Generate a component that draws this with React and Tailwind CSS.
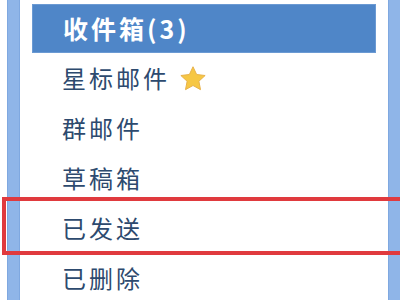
import React from "react";

const font = { fontFamily: '"Noto Sans CJK SC", "Noto Sans", sans-serif' };

function Star() {
  return (
    <svg width="30" height="30" viewBox="0 0 24 24" className="ml-[8px] mt-[2px]">
      <path
        d="M12 2.2l2.9 6.2 6.8.8-5 4.6 1.3 6.7L12 17.2l-6 3.3 1.3-6.7-5-4.6 6.8-.8z"
        fill="#f6c744"
        stroke="#e8b24a"
        strokeWidth="0.8"
        strokeLinejoin="round"
      />
    </svg>
  );
}

function Row({ children, star }) {
  return (
    <div className="h-[50px] flex items-center pl-[30px] text-[24px] tracking-[3px] text-[#2d4a6e]">
      <span>{children}</span>
      {star && <Star />}
    </div>
  );
}

export default function App() {
  return (
    <div className="w-[400px] h-[300px] bg-white overflow-hidden relative" style={font}>
      <div className="flex h-full">
        <div className="ml-[7px] w-[13px] h-full bg-[#8fb5e8] border-x border-[#7fa8e0]" />
        <div className="ml-[12px] w-[346px] pt-[4px]">
          <div className="h-[49px] bg-[#4f86c8] flex items-center pl-[30px] text-[25px] font-bold tracking-[3px] text-white border border-[#6b9ad3]">
            收件箱(3)
          </div>
          <Row star>星标邮件</Row>
          <Row>群邮件</Row>
          <Row>草稿箱</Row>
          <div className="relative">
            <Row>已发送</Row>
            <div className="absolute left-[-30px] right-[-40px] top-[-6px] bottom-[-2px] border-[4px] border-[#e03a3e]" />
          </div>
          <Row>已删除</Row>
        </div>
        <div className="ml-[12px] w-[12px] h-full bg-[#8fb5e8] border-l border-[#7fa8e0]" />
      </div>
    </div>
  );
}
